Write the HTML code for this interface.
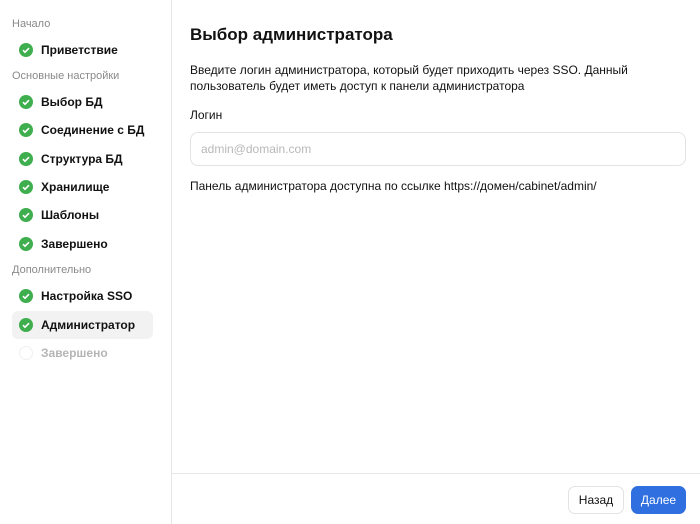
<!DOCTYPE html>
<html><head><meta charset="utf-8"><style>
*{box-sizing:border-box;margin:0;padding:0}
body{width:700px;height:524px;font-family:"Liberation Sans",sans-serif;background:#fff;position:relative;overflow:hidden;color:#111}
.side{position:absolute;left:0;top:0;width:172px;height:524px;border-right:1px solid #e6e6e6}
.g{position:absolute;left:12px;font-size:11px;color:#8a8a8a}
.it{position:absolute;left:12px;width:141px;height:28px;border-radius:6px;font-size:12px;font-weight:bold;display:flex;align-items:center;padding-left:29px}
.it svg{position:absolute;left:7px;top:7px}
.sel{background:#f2f2f2}
.dis{color:#b5b5b5}
h1{position:absolute;left:190px;top:25px;font-size:17px;font-weight:bold}
.p{position:absolute;left:190px;font-size:12px;line-height:16px}
.in{position:absolute;left:190px;top:132px;width:496px;height:34px;border:1px solid #e3e3e3;border-radius:8px;font-size:12px;color:#b8b8b8;padding:9px 0 0 10px}
.foot{position:absolute;left:172px;right:0;top:473px;border-top:1px solid #e6e6e6}
.b{position:absolute;top:486px;height:28px;border-radius:7px;font-size:12px;display:flex;align-items:center;justify-content:center}
</style></head><body>
<div class="side">
<div class="g" style="top:18px">Начало</div>
<div class="it" style="top:36px"><svg width="14" height="14"><circle cx="7" cy="7" r="7" fill="#3fae4f"/><path d="M4 7.2l2 2 4-4" stroke="#fff" stroke-width="1.6" fill="none"/></svg>Приветствие</div>
<div class="g" style="top:70px">Основные настройки</div>
<div class="it" style="top:88px"><svg width="14" height="14"><circle cx="7" cy="7" r="7" fill="#3fae4f"/><path d="M4 7.2l2 2 4-4" stroke="#fff" stroke-width="1.6" fill="none"/></svg>Выбор БД</div>
<div class="it" style="top:116px"><svg width="14" height="14"><circle cx="7" cy="7" r="7" fill="#3fae4f"/><path d="M4 7.2l2 2 4-4" stroke="#fff" stroke-width="1.6" fill="none"/></svg>Соединение с БД</div>
<div class="it" style="top:145px"><svg width="14" height="14"><circle cx="7" cy="7" r="7" fill="#3fae4f"/><path d="M4 7.2l2 2 4-4" stroke="#fff" stroke-width="1.6" fill="none"/></svg>Структура БД</div>
<div class="it" style="top:173px"><svg width="14" height="14"><circle cx="7" cy="7" r="7" fill="#3fae4f"/><path d="M4 7.2l2 2 4-4" stroke="#fff" stroke-width="1.6" fill="none"/></svg>Хранилище</div>
<div class="it" style="top:201px"><svg width="14" height="14"><circle cx="7" cy="7" r="7" fill="#3fae4f"/><path d="M4 7.2l2 2 4-4" stroke="#fff" stroke-width="1.6" fill="none"/></svg>Шаблоны</div>
<div class="it" style="top:230px"><svg width="14" height="14"><circle cx="7" cy="7" r="7" fill="#3fae4f"/><path d="M4 7.2l2 2 4-4" stroke="#fff" stroke-width="1.6" fill="none"/></svg>Завершено</div>
<div class="g" style="top:264px">Дополнительно</div>
<div class="it" style="top:282px"><svg width="14" height="14"><circle cx="7" cy="7" r="7" fill="#3fae4f"/><path d="M4 7.2l2 2 4-4" stroke="#fff" stroke-width="1.6" fill="none"/></svg>Настройка SSO</div>
<div class="it sel" style="top:311px"><svg width="14" height="14"><circle cx="7" cy="7" r="7" fill="#3fae4f"/><path d="M4 7.2l2 2 4-4" stroke="#fff" stroke-width="1.6" fill="none"/></svg>Администратор</div>
<div class="it dis" style="top:339px"><svg width="14" height="14"><circle cx="7" cy="7" r="6.5" fill="#fff" stroke="#f0f0f0"/></svg>Завершено</div>
</div>
<h1>Выбор администратора</h1>
<div class="p" style="top:62px">Введите логин администратора, который будет приходить через SSO. Данный<br>пользователь будет иметь доступ к панели администратора</div>
<div class="p" style="top:107px">Логин</div>
<div class="in">admin@domain.com</div>
<div class="p" style="top:178px">Панель администратора доступна по ссылке https://домен/cabinet/admin/</div>
<div class="foot"></div>
<div class="b" style="left:568px;width:56px;border:1px solid #e3e3e3;color:#111">Назад</div>
<div class="b" style="left:631px;width:55px;background:#2f6fdf;color:#fff">Далее</div>
</body></html>
